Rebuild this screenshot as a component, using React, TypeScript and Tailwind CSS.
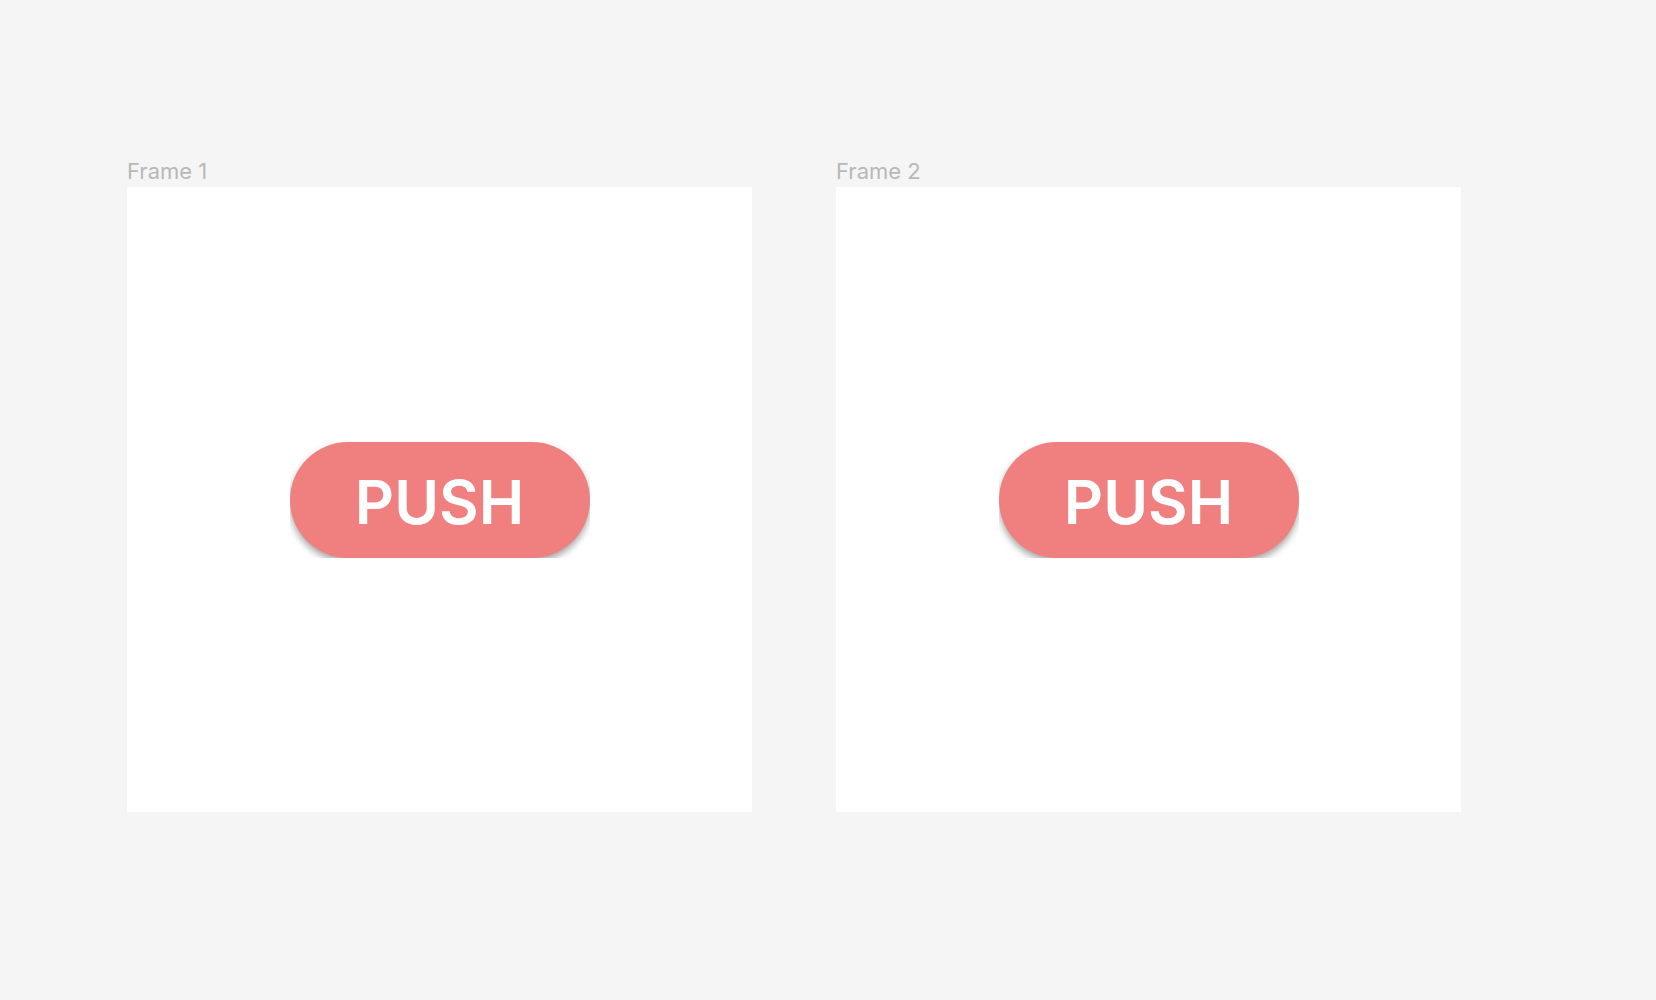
import React from 'react'

function PushButton() {
    // the outer box clips the drop shadow along the bottom edge
    return (
        <div className="w-[300px] h-[116px] overflow-hidden">
            <button className="w-full h-full pt-[5px] rounded-full bg-[#f08080] shadow-[0_4px_7px_rgba(0,0,0,0.35)] flex items-center justify-center text-white text-[61px] font-semibold leading-none font-['Inter','Noto_Sans',sans-serif]">
                PUSH
            </button>
        </div>
    )
}

function Frame({ name }: { name: string }) {
    return (
        <div className="flex flex-col">
            <div className="text-[22px] leading-[26px] mb-[3px] text-[#b8b8b8] font-['Inter','Noto_Sans',sans-serif]">
                {name}
            </div>
            <div className="w-[625px] h-[625px] bg-white flex items-center justify-center">
                <PushButton />
            </div>
        </div>
    )
}

export default function App() {
    return (
        <div className="min-h-screen bg-[#f5f5f5] pt-[158px] pl-[127px] flex gap-[84px]">
            <Frame name="Frame 1" />
            <Frame name="Frame 2" />
        </div>
    )
}
